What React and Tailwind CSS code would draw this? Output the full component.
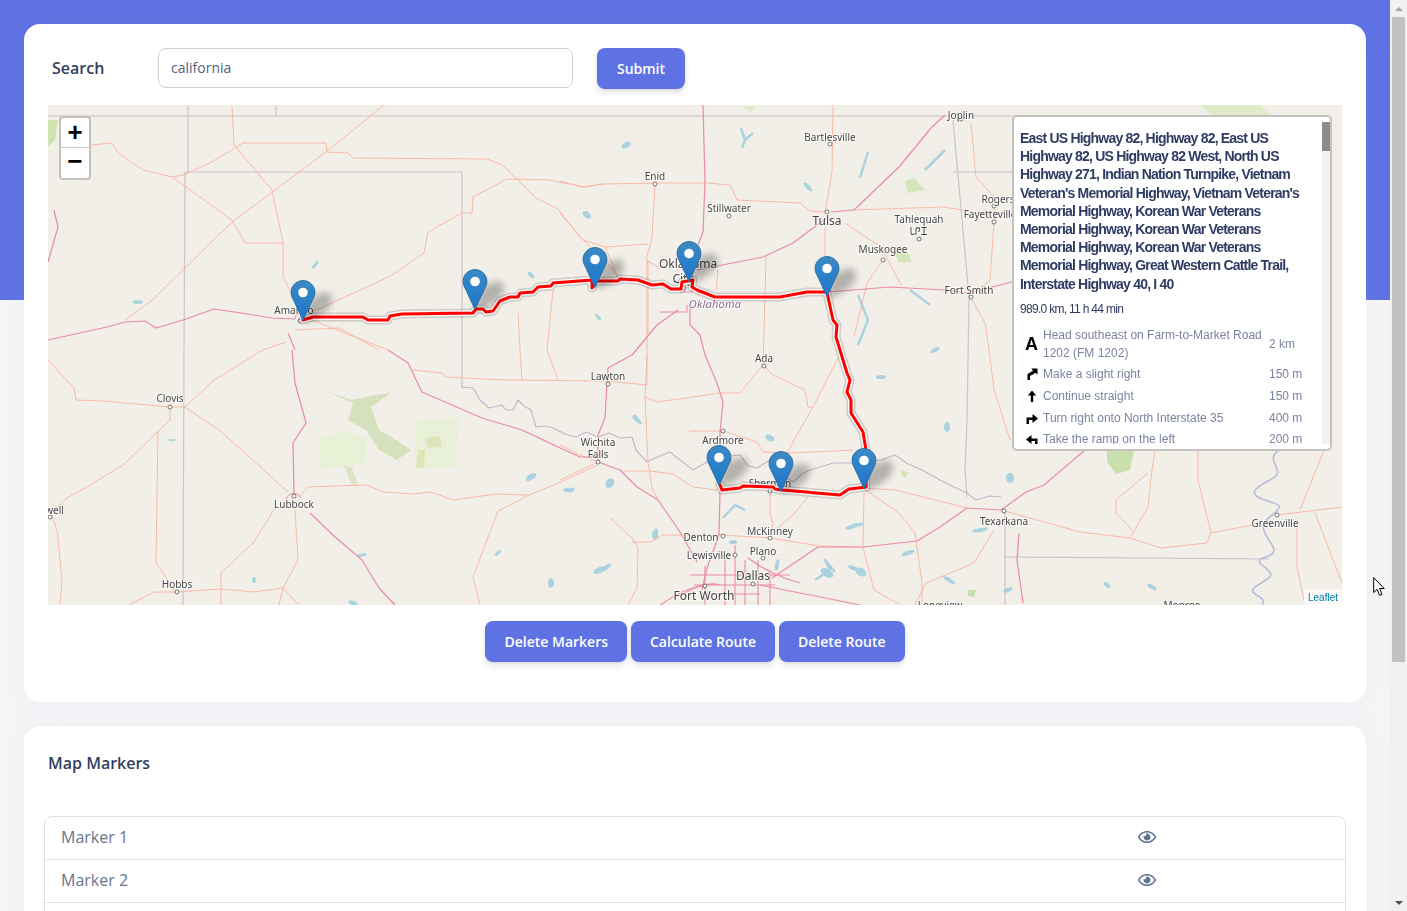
import React from "react";
import { FaRegEye } from "react-icons/fa";

const pink = [
  "48,340 107,327 125,322 145,321 156,328 183,320 214,309 241,313 272,318 295,319",
  "292,350 295,383 306,423 293,443 294,493",
  "288,333 295,350",
  "388,350 408,363 422,392 482,418 522,430 558,447 580,457 598,457",
  "703,105 705,182 703,232 698,245",
  "697,270 763,257 793,243 813,228 827,218",
  "690,305 690,325 700,335 705,355 717,383 723,402 720,432 720,492 719,535 707,568 702,590",
  "678,310 657,325 632,355 608,368 607,383 605,418 598,435 598,462",
  "598,462 620,470 637,487 658,500 680,532 697,562",
  "772,578 818,547 863,547 917,541 940,527 967,508 1001,510 1026,492 1044,485 1085,450",
  "1019,533 1017,560 1023,603",
  "931,128 899,167 854,210 831,212",
  "945,115 931,128",
  "828,292 890,287 944,290 969,293 1012,282",
  "48,262 58,227 54,210",
  "310,513 335,537 362,560 379,588 395,605",
];

const orange = [
  "125,320 150,302 232,222 326,152 384,105",
  "92,145 112,143 118,153 143,170 172,177 232,220 245,243 282,243",
  "173,177 183,175 210,163 243,143 326,143 327,152 348,153 353,158 487,159 502,165 518,180 536,198 558,209 580,237 607,263 618,277",
  "232,107 234,145 272,190 283,243 283,277 295,300",
  "312,312 382,280 395,273 424,253 428,232 462,213 472,213 473,197 507,179 549,180 585,187 603,184 655,183 707,183 730,185 737,200 800,203 810,211 827,212",
  "655,184 652,238 646,260 660,268",
  "560,181 582,187 603,184",
  "560,213 583,240 605,247 648,244",
  "605,247 618,278",
  "648,262 648,335",
  "825,212 832,172 833,105",
  "825,227 825,292",
  "851,210 944,207 990,215",
  "971,123 976,177 994,197 994,223 990,280 971,297",
  "883,260 867,283 854,337",
  "845,223 881,247 901,285",
  "971,298 985,323 990,357 994,390 1010,440",
  "766,257 763,367",
  "716,290 718,270",
  "560,480 598,462",
  "560,445 580,455 598,462",
  "623,471 650,471 673,474 693,487 717,490",
  "647,355 645,398 648,462 652,488 658,500",
  "645,397 657,402 693,397 720,393 740,393 763,365 773,375 805,390 808,407 813,407 838,358",
  "813,407 793,442 780,468",
  "689,431 723,431 757,442 763,452 793,453 853,450",
  "770,492 770,512 773,525 769,538",
  "808,497 793,515 773,532",
  "632,542 650,542 663,535 723,535 770,538 820,546 860,547",
  "610,518 632,538 638,548 637,588 628,605",
  "1001,510 1037,520 1080,532 1130,538 1161,548 1207,543 1211,533 1252,525",
  "1211,533 1198,480 1198,450",
  "1130,538 1148,507 1152,470 1155,450",
  "1132,530 1116,513 1116,500 1148,473",
  "1277,515 1342,507",
  "1315,513 1342,583",
  "1297,527 1297,567 1305,605",
  "1300,510 1324,450",
  "863,488 899,513 915,533 922,583 922,603",
  "864,493 863,547 874,590 899,604",
  "994,530 974,563 926,583 915,605",
  "863,488 895,490 935,500 967,508",
  "295,510 298,560 283,588 279,605",
  "275,508 254,542 221,573 221,605",
  "176,592 221,589 254,592 283,588 299,605",
  "129,605 154,592 176,592",
  "48,360 74,388 76,400 103,401 170,407 185,407 214,380 263,350 286,342",
  "185,407 219,430 245,453 288,492",
  "170,407 170,420 123,465 87,487 67,498 51,513",
  "158,430 156,563 176,592",
  "51,513 57,530 62,580 60,605",
  "299,497 308,487 366,485 384,492 413,494 431,492 453,500 496,494 529,495 554,485 598,465",
  "529,495 498,511 473,577 480,605",
  "413,370 442,373 446,377 504,380 607,381 647,385",
  "518,313 520,350 522,380",
  "553,290 547,350 558,380",
  "295,330 339,328 379,350",
  "647,260 647,385",
  "312,320 388,350",
];

const borders = [
  "48,116 1014,116",
  "188,105 188,172",
  "276,105 276,116",
  "185,172 462,172 462,388",
  "185,172 184,350 183,605",
  "953,120 969,297 967,423 965,470 967,497",
  "953,172 1014,172",
  "1005,510 1005,605",
  "1005,557 1268,559",
];

const riverPts =
  "462,387 473,388 480,400 489,408 502,405 506,410 513,410 518,400 524,406 531,410 536,427 545,426 553,428 565,434 576,437 586,432 598,437 609,433 620,438 632,437 636,450 647,462 655,458 670,452 680,460 693,470 707,462 722,466 730,456 740,455 748,466 757,468 770,460 778,472 793,482 802,474 810,470 833,463 856,463 881,460 895,455 908,464 922,470 940,480 952,486 967,493 976,500 990,496 1001,497";

const mississippi =
  "M1279 450C1262 462 1290 470 1270 480S1250 495 1265 500 1285 505 1272 515 1262 530 1272 545 1250 555 1262 565 1275 575 1258 585 1270 595 1262 605";

const lakes = [
  [626, 145, 5, 3, -30], [587, 215, 5, 3, 40], [315, 265, 5, 1.5, -50], [138, 302, 5, 2, 0], [531, 275, 4, 2, 50],
  [598, 317, 4, 1.5, 50], [808, 187, 6, 2, 45], [881, 377, 5, 2, 0], [935, 350, 5, 2, -30],
  [947, 427, 3, 5, 0], [770, 438, 5, 3, 30], [610, 483, 4, 5, 30], [568, 490, 5, 2, 0], [637, 420, 6, 2, 40],
  [655, 535, 3, 5, 0], [600, 570, 7, 3, -20], [853, 568, 5, 2, 20], [857, 525, 7, 2, -10], [777, 565, 2, 6, 10],
  [733, 542, 4, 2, 0], [851, 527, 6, 2, -15], [827, 573, 7, 4, 30], [861, 572, 6, 4, 30], [908, 553, 7, 2, -20],
  [949, 580, 7, 2, 30], [980, 530, 8, 2, -10], [1010, 478, 4, 5, 0], [1008, 590, 5, 2, -20], [1107, 585, 4, 2, 40],
  [1152, 587, 5, 2, 30], [531, 477, 6, 3, -30], [571, 490, 4, 2, -20], [609, 483, 3, 5, 30], [636, 418, 4, 2, 50],
  [656, 533, 2, 5, 0], [607, 567, 5, 2, -40], [551, 583, 3, 5, 0], [498, 553, 4, 1.5, -40], [254, 580, 2, 3, 0],
  [353, 603, 5, 2, 20], [362, 555, 5, 1.5, -10], [172, 440, 4, 1, 0],
];

const lakeLines = [
  "860,178 868,152", "925,170 945,150", "858,295 868,320 858,345", "910,290 930,305", "723,518 735,505 745,510",
  "815,580 830,570 825,560 835,572", "753,133 745,140 742,148", "741,128 745,140",
];

const greens = [
  ["#d5e0bc", "324,390 353,403 348,420 366,430 379,450 397,460 411,450 393,438 379,430 371,407 391,393 375,395 352,400"],
  ["#e8f0d6", "319,437 345,432 366,437 366,463 321,470"],
  ["#dbe5c6", "344,465 352,468 358,485 352,486"],
  ["#e9f0d8", "415,420 460,417 455,467 415,470"],
  ["#dfe3b8", "418,450 425,450 424,468 416,468"],
  ["#dfe3b8", "425,438 440,436 442,447 428,448"],
  ["#cfe3b0", "48,120 58,120 55,140 48,147"],
  ["#c9e0ae", "1107,450 1134,450 1130,470 1116,474 1107,462"],
  ["#d5e5bb", "901,470 908,472 906,478 901,476"],
  ["#c9e0ae", "968,590 976,590 974,597 968,596"],
  ["#d5e5bb", "905,181 914,178 925,190 908,193"],
  ["#d5e5bb", "895,252 907,250 912,262 898,262"],
  ["#dfebc8", "1200,105 1260,105 1280,125 1240,120 1215,118"],
  ["#dfebc8", "742,108 755,105 752,112"],
];

const labels = [
  ["Joplin", 961, 119], ["Bartlesville", 830, 141], ["Enid", 655, 180], ["Stillwater", 729, 212],
  ["Tulsa", 827, 225, 12], ["Tahlequah", 919, 223], ["ᏓᎵᏆ", 919, 235], ["Rogers", 998, 203], ["Fayetteville", 990, 218],
  ["Muskogee", 883, 253], ["Fort Smith", 969, 294], ["Oklahoma", 688, 268, 12], ["City", 683, 283, 12],
  ["Amarillo", 294, 314], ["Ada", 764, 362], ["Lawton", 608, 380], ["Clovis", 170, 402], ["Wichita", 598, 446],
  ["Falls", 598, 458], ["Ardmore", 723, 444], ["Sherman", 770, 487], ["Texarkana", 1004, 525], ["Greenville", 1275, 527],
  ["McKinney", 770, 535], ["Denton", 701, 541], ["Lewisville", 709, 559], ["Plano", 763, 555], ["Dallas", 753, 580, 12],
  ["Fort Worth", 704, 600, 12], ["Lubbock", 294, 508], ["Roswell", 46, 514], ["Hobbs", 177, 588], ["Longview", 940, 609],
  ["Monroe", 1182, 609],
];

const towns = [
  [961, 119], [830, 144], [655, 184], [729, 216], [827, 212], [919, 239], [994, 206], [994, 222], [883, 260], [971, 297],
  [684, 288], [300, 321], [764, 366], [608, 384], [170, 407], [598, 462], [723, 431], [770, 491], [1004, 511], [1277, 515],
  [770, 538], [723, 536], [735, 555], [763, 558], [753, 584], [705, 586], [294, 496], [50, 517], [177, 592],
];

const route =
  "303,320 313,317 363,317 368,320 388,320 390,316 402,314 473,313 476,309 483,309 486,312 493,311 500,301 510,297 518,297 520,293 533,292 538,287 551,286 553,283 592,280 592,288 596,281 618,281 620,279 638,280 652,285 663,284 671,289 681,289 682,282 693,280 692,287 697,290 715,297 780,297 807,292 827,292 828,297 833,320 837,325 836,337 847,373 850,380 847,392 851,400 851,413 863,432 866,450 866,487 858,488 849,489 840,495 782,490 775,489 773,487 743,486 740,488 722,490 720,485";

const pins = [
  [303, 321], [475, 310], [595, 288], [689, 282], [827, 297], [719, 486], [781, 492], [864, 489],
];

function MapPin({ x, y }) {
  return (
    <g transform={`translate(${x - 12.5} ${y - 41})`}>
      <path d="M12 41 L18 20 Q34 8 41 15 Q45 30 18 41 Z" fill="#000" opacity="0.26" filter="url(#pinShadow)" />
      <path
        d="M12.5 .6C5.8 .6 .6 5.9 .6 12.4 .6 15 1.5 17.5 3 20L12.5 40.4 22 20c1.5-2.5 2.4-5 2.4-7.6C24.4 5.9 19.2 .6 12.5 .6Z"
        fill="url(#pinFill)"
        stroke="#2b6f9f"
        strokeWidth="1"
      />
      <circle cx="12.5" cy="12.5" r="4.8" fill="#fff" />
    </g>
  );
}

function MapTiles() {
  return (
    <svg viewBox="48 105 1294 500" className="block w-full h-full">
      <defs>
        <linearGradient id="pinFill" x1="0" y1="0" x2="0" y2="1">
          <stop offset="0" stopColor="#3b8ac4" />
          <stop offset="1" stopColor="#1c76cc" />
        </linearGradient>
        <filter id="pinShadow" x="-50%" y="-50%" width="200%" height="200%">
          <feGaussianBlur stdDeviation="3.5" />
        </filter>
        <filter id="tileBlur" x="0" y="0" width="100%" height="100%">
          <feGaussianBlur stdDeviation="0.4" />
        </filter>
      </defs>
      <rect x="48" y="105" width="1294" height="500" fill="#f2efe9" />
      <g filter="url(#tileBlur)">
        {greens.map(([c, p], i) => (
          <polygon key={i} points={p} fill={c} />
        ))}
        {lakes.map(([cx, cy, rx, ry, r], i) => (
          <ellipse key={i} cx={cx} cy={cy} rx={rx} ry={ry} transform={`rotate(${r} ${cx} ${cy})`} fill="#aad3df" />
        ))}
        {lakeLines.map((p, i) => (
          <polyline key={i} points={p} fill="none" stroke="#aad3df" strokeWidth="2.5" strokeLinejoin="round" />
        ))}
        {borders.map((p, i) => (
          <polyline key={i} points={p} fill="none" stroke="#cfc0cd" strokeWidth="1.2" />
        ))}
        <polyline points={riverPts} fill="none" stroke="#c4b6cc" strokeWidth="1.2" strokeLinejoin="round" />
        <path d={mississippi} fill="none" stroke="#b9bdd8" strokeWidth="1.6" />
        {orange.map((p, i) => (
          <polyline key={i} points={p} fill="none" stroke="#f9b8a5" strokeWidth="1" strokeLinejoin="round" />
        ))}
        {pink.map((p, i) => (
          <polyline key={i} points={p} fill="none" stroke="#ea8aa5" strokeWidth="1.2" strokeLinejoin="round" />
        ))}
        {/* Dallas / Fort Worth road tangle */}
        <g fill="none" stroke="#ea8aa5" strokeWidth="1.1">
          <path d="M690 575H790M694 585H775M700 594H760M680 596Q705 580 720 585M705 566V605M725 555V605M735 545V605M745 560V605M758 560V605M770 570V605" />
          <path d="M748 558Q770 575 800 583M760 585L860 605M660 605Q690 585 705 586" />
          <path d="M682 270H692V292H680V290M687 305V312H660" />
        </g>
        <path d="M295 319a6 6 0 0 1 12 0" fill="none" stroke="#ea8aa5" />
        <path d="M286 500a8 8 0 0 1 15 -2" fill="none" stroke="#ea8aa5" />
      </g>
      {towns.map(([cx, cy], i) => (
        <circle key={i} cx={cx} cy={cy} r="2" fill="#fff" stroke="#555" strokeWidth="0.8" />
      ))}
      <g fontFamily="'Noto Sans', sans-serif" textAnchor="middle" fill="#444" stroke="#fff" strokeWidth="2" paintOrder="stroke" strokeOpacity="0.7">
        {labels.map(([t, x, y, s], i) => (
          <text key={i} x={x} y={y} fontSize={s || 10}>
            {t}
          </text>
        ))}
        <text x="715" y="308" fontSize="11" fontStyle="italic" fill="#8b6a94" letterSpacing="0.2">
          Oklahoma
        </text>
      </g>
      <g fill="none" strokeLinejoin="round" strokeLinecap="round">
        <polyline points={route} stroke="#000" strokeOpacity="0.15" strokeWidth="9" />
        <polyline points={route} stroke="#fff" strokeOpacity="0.8" strokeWidth="6" />
        <polyline points={route} stroke="#ff0000" strokeWidth="3" />
      </g>
      {pins.map(([x, y], i) => (
        <MapPin key={i} x={x} y={y} />
      ))}
    </svg>
  );
}

const turnIcons = {
  slight: "M2.5 13V7L8 3.8 6.3 1.5H12.5V7.8L10.7 5.8 5 9V13Z",
  straight: "M5.8 13V6.5H2.8L7 1.5 11.2 6.5H8.2V13Z",
  right: "M1.5 13V6.5H7.5V3L13 7.5 7.5 12V9H4V13Z",
  left: "M12.5 13V6.5H6.5V3L1 7.5 6.5 12V9H10V13Z",
};

const steps = [
  ["A", "Head southeast on Farm-to-Market Road 1202 (FM 1202)", "2 km"],
  ["slight", "Make a slight right", "150 m"],
  ["straight", "Continue straight", "150 m"],
  ["right", "Turn right onto North Interstate 35", "400 m"],
  ["left", "Take the ramp on the left", "200 m"],
];

function RoutePanel() {
  return (
    <div className="absolute top-[10px] right-[10px] w-[320px] h-[336px] bg-white border-2 border-[#c4c2bf] rounded-[5px] p-[5px] pr-0 flex font-['Liberation_Sans',Arial,sans-serif]">
      <div className="flex-1 overflow-hidden h-[322px] pl-px">
        <h3 className="mt-[7px] text-[14px] leading-[18.2px] font-bold text-[#2f3b62] tracking-[-0.8px] w-[290px]">
          East US Highway 82, Highway 82, East US Highway 82, US Highway 82 West, North US Highway 271, Indian Nation Turnpike, Vietnam Veteran's Memorial Highway, Vietnam Veteran's Memorial Highway, Korean War Veterans Memorial Highway, Korean War Veterans Memorial Highway, Korean War Veterans Memorial Highway, Great Western Cattle Trail, Interstate Highway 40, I 40
        </h3>
        <p className="mt-[8px] text-[12px] leading-[16px] text-[#2f3b62] tracking-[-0.7px]">989.0 km, 11 h 44 min</p>
        <div className="mt-[7px] text-[12px] leading-[18px] text-[#7b84a0]">
          {steps.map(([icon, text, dist], i) => (
            <div key={text} className={`flex items-center py-[2px] min-h-[22px] ${i === 0 || i === 3 ? "-mb-px" : ""}`}>
              <span className="w-[23px] shrink-0 flex justify-center">
                {icon === "A" ? (
                  <span className="text-[18px] font-bold text-black leading-[18px]">A</span>
                ) : (
                  <svg viewBox="0 0 14 14" className="w-[14px] h-[14px]">
                    <path d={turnIcons[icon]} fill="#000" />
                  </svg>
                )}
              </span>
              <span className="w-[226px] shrink-0">{text}</span>
              <span className="whitespace-nowrap">{dist}</span>
            </div>
          ))}
        </div>
      </div>
      <div className="w-2 h-[322px] bg-[#f1f1f1] shrink-0 mr-0">
        <div className="h-[29px] bg-[#8c8c8c]" />
      </div>
    </div>
  );
}

function MapBox() {
  return (
    <div className="relative h-[500px] overflow-hidden">
      <MapTiles />
      <div className="absolute top-[11px] left-[11px] w-[32px] border-2 border-[#c4c2bf] rounded-[4px] bg-white font-['Liberation_Mono',monospace] font-bold text-black">
        <div className="h-[30px] flex items-center justify-center pt-[3px] text-[26px] border-b border-[#ccc]">+</div>
        <div className="h-[30px] flex items-center justify-center text-[26px]">−</div>
      </div>
      <RoutePanel />
      <div className="absolute bottom-0 right-0 w-[38px] h-[16px] bg-white/70 flex items-center justify-center pt-px text-[10px] text-[#0078a8] font-['Liberation_Sans',Arial,sans-serif]">
        Leaflet
      </div>
    </div>
  );
}

function ActionButton({ children, className }) {
  return (
    <button className={`h-[41px] px-[19px] rounded-lg bg-[#5e72e4] text-white text-[14px] font-semibold shadow-[0_4px_6px_rgba(50,50,93,0.11),0_1px_3px_rgba(0,0,0,0.08)] ${className || ""}`}>
      {children}
    </button>
  );
}

function Scrollbar() {
  return (
    <div className="w-[17px] shrink-0 h-full bg-[#f1f1f1] flex flex-col">
      <div className="h-[17px] flex items-center justify-center">
        <div className="w-0 h-0 border-x-[4px] border-x-transparent border-b-[4px] border-b-[#a3a3a3]" />
      </div>
      <div className="h-[645px] mx-[2px] bg-[#c1c1c1]" />
      <div className="flex-1" />
      <div className="h-[17px] flex items-center justify-center">
        <div className="w-0 h-0 border-x-[4px] border-x-transparent border-t-[4px] border-t-[#505050]" />
      </div>
    </div>
  );
}

export default function App() {
  return (
    <div className="relative w-[1407px] h-[911px] overflow-hidden flex bg-[#f4f5f7] font-['Open_Sans',sans-serif]">
      <div className="w-[1390px] shrink-0">
        <div className="h-[300px] bg-[#5e72e4]" />
        <div className="-mt-[276px] px-6">
          <div className="bg-white rounded-2xl p-6 h-[678px] shadow-[0_0_2rem_0_rgba(136,152,170,0.07)]">
            <div className="flex items-start mb-4">
              <label className="w-[110px] pl-1 text-[16px] leading-10 font-semibold text-[#343f5f]">Search</label>
              <input
                type="text"
                defaultValue="california"
                className="w-[415px] h-10 border border-[#cad1d7] rounded-lg px-3 pb-[2px] text-[14px] text-[#525f7f] outline-none"
              />
              <ActionButton className="ml-6 w-[88px] px-0">Submit</ActionButton>
            </div>
            <MapBox />
            <div className="flex justify-center gap-1 mt-4">
              <ActionButton>Delete Markers</ActionButton>
              <ActionButton>Calculate Route</ActionButton>
              <ActionButton>Delete Route</ActionButton>
            </div>
          </div>
          <div className="mt-6 bg-white rounded-2xl pt-[25px] px-6 h-[400px] shadow-[0_0_2rem_0_rgba(136,152,170,0.07)]">
            <h3 className="text-[16px] leading-6 font-semibold text-[#343f5f]">Map Markers</h3>
            <ul className="-mx-1 mt-[41px] border border-[#e2e2e2] rounded-lg text-[16px] text-[#67748e]">
              {["Marker 1", "Marker 2", "Marker 3"].map((m) => (
                <li key={m} className="h-[43px] px-4 pb-[2px] flex items-center border-b border-[#e2e2e2]">
                  <span className="w-[1077px]">{m}</span>
                  <FaRegEye className="w-[18px] h-[18px] text-[#5f7396]" />
                </li>
              ))}
            </ul>
          </div>
        </div>
      </div>
      <Scrollbar />
      {/* mouse cursor left in the screenshot */}
      <svg viewBox="0 0 14 20" className="absolute left-[1373px] top-[577px] w-[14px] h-[20px]">
        <path d="M.7.7V15.5L4.2 12.3 6.6 18.3 9 17.3 6.6 11.5H11.2Z" fill="#fff" stroke="#000" strokeWidth="1" />
      </svg>
    </div>
  );
}
